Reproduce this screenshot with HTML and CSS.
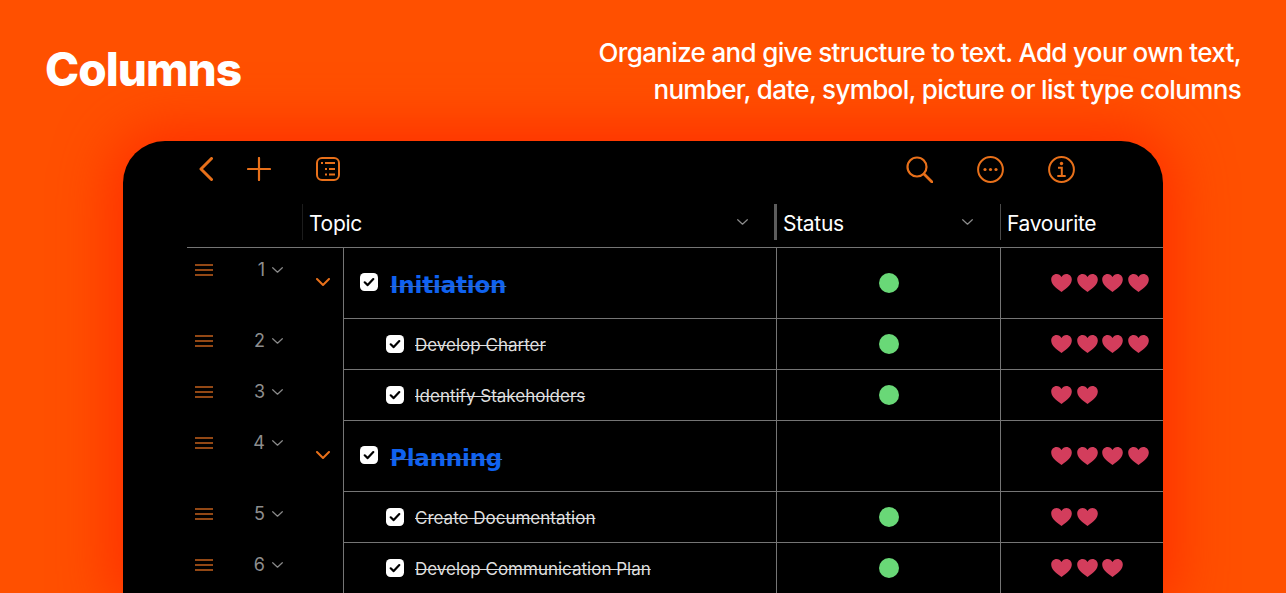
FILE: index.html
```html
<!DOCTYPE html>
<html lang="en">
<head>
    <meta charset="UTF-8">
    <title>Columns</title>
    <link rel="stylesheet" href="styles.css">
</head>
<body>
    <svg class="defs" width="0" height="0">
        <symbol id="heart" viewBox="0 0 21 18"><path d="M10.5 18C4 13.6.2 10 .2 5.6.2 2.4 2.6 0 5.6 0c2.1 0 3.8 1.1 4.9 3C11.6 1.100 13.300 0 15.400 0c3 0 5.400 2.400 5.400 5.600C20.800 10 17 13.600 10.500 18z"/></symbol>
        <symbol id="chev" viewBox="0 0 11 6"><path d="M.7.7l4.800 4.500L10.300.7" fill="none" stroke="currentColor" stroke-width="1.200" stroke-linecap="round" stroke-linejoin="round"/></symbol>
        <symbol id="handle" viewBox="0 0 18 12"><path d="M0 1h18M0 6h18M0 11h18" fill="none" stroke="currentColor" stroke-width="1.500"/></symbol>
        <symbol id="check" viewBox="0 0 18 18"><rect width="18" height="18" rx="4.500" fill="#fff"/><path d="M4.700 9.300l3 2.800 5.600-6" fill="none" stroke="#000" stroke-width="2.200" stroke-linecap="round" stroke-linejoin="round"/></symbol>
    </svg>

    <header class="top">
        <h1>Columns</h1>
        <p>Organize and give structure to text. Add your own text,<br>number, date, symbol, picture or list type columns</p>
    </header>

    <div class="device">
        <div class="toolbar">
            <div class="tools">
                <svg class="back" width="14" height="24" viewBox="0 0 14 24"><path d="M12.500 1.500L2 12l10.500 10.500" fill="none" stroke="currentColor" stroke-width="3" stroke-linecap="round" stroke-linejoin="round"/></svg>
                <svg class="plus" width="24" height="24" viewBox="0 0 24 24"><path d="M12 1v22M1 12h22" fill="none" stroke="currentColor" stroke-width="2.200" stroke-linecap="round"/></svg>
                <svg class="list" width="24" height="24" viewBox="0 0 24 24" fill="none" stroke="currentColor" stroke-width="2"><rect x="1" y="1" width="22" height="22" rx="5"/><path d="M9 6h10M13 12h6M13 17.500h6"/><path d="M5 6h2M9 12h2M9 17.500h2"/></svg>
            </div>
            <div class="tools tools-right">
                <svg width="27" height="27" viewBox="0 0 27 27" fill="none" stroke="currentColor" stroke-width="2.200"><circle cx="11" cy="11" r="9.500"/><path d="M18 18l8 8" stroke-width="2.800" stroke-linecap="round"/></svg>
                <svg width="27" height="27" viewBox="0 0 27 27"><circle cx="13.500" cy="13.500" r="12.400" fill="none" stroke="currentColor" stroke-width="2"/><circle cx="8" cy="13.500" r="1.600" fill="currentColor"/><circle cx="13.500" cy="13.500" r="1.600" fill="currentColor"/><circle cx="19" cy="13.500" r="1.600" fill="currentColor"/></svg>
                <svg width="27" height="27" viewBox="0 0 27 27"><circle cx="13.500" cy="13.500" r="12.400" fill="none" stroke="currentColor" stroke-width="2"/><circle cx="13.500" cy="7.500" r="1.700" fill="currentColor"/><path d="M10 11.800h3.800v8M9.300 20h8.400" fill="none" stroke="currentColor" stroke-width="2"/></svg>
            </div>
        </div>

        <div class="col-head">
            <div class="col-spacer"></div>
            <div class="col col-topic"><span>Topic</span><svg class="chev"><use href="#chev"/></svg></div>
            <div class="col col-status"><span>Status</span><svg class="chev"><use href="#chev"/></svg></div>
            <div class="col col-fav"><span>Favourite</span></div>
        </div>

        <div class="row row-group">
            <div class="gutter">
                <svg class="handle"><use href="#handle"/></svg>
                <span class="num">1</span><svg class="chev"><use href="#chev"/></svg>
                <svg class="expand" width="14" height="9" viewBox="0 0 14 9"><path d="M1 1l6 6 6-6" fill="none" stroke="currentColor" stroke-width="2" stroke-linecap="round" stroke-linejoin="round"/></svg>
            </div>
            <div class="cell topic"><svg class="check"><use href="#check"/></svg><span class="title">Initiation</span></div>
            <div class="cell status"><i class="dot"></i></div>
            <div class="cell fav"><svg class="heart"><use href="#heart"/></svg><svg class="heart"><use href="#heart"/></svg><svg class="heart"><use href="#heart"/></svg><svg class="heart"><use href="#heart"/></svg></div>
        </div>

        <div class="row">
            <div class="gutter">
                <svg class="handle"><use href="#handle"/></svg>
                <span class="num">2</span><svg class="chev"><use href="#chev"/></svg>
            </div>
            <div class="cell topic"><svg class="check"><use href="#check"/></svg><span class="task">Develop Charter</span></div>
            <div class="cell status"><i class="dot"></i></div>
            <div class="cell fav"><svg class="heart"><use href="#heart"/></svg><svg class="heart"><use href="#heart"/></svg><svg class="heart"><use href="#heart"/></svg><svg class="heart"><use href="#heart"/></svg></div>
        </div>

        <div class="row">
            <div class="gutter">
                <svg class="handle"><use href="#handle"/></svg>
                <span class="num">3</span><svg class="chev"><use href="#chev"/></svg>
            </div>
            <div class="cell topic"><svg class="check"><use href="#check"/></svg><span class="task">Identify Stakeholders</span></div>
            <div class="cell status"><i class="dot"></i></div>
            <div class="cell fav"><svg class="heart"><use href="#heart"/></svg><svg class="heart"><use href="#heart"/></svg></div>
        </div>

        <div class="row row-group">
            <div class="gutter">
                <svg class="handle"><use href="#handle"/></svg>
                <span class="num">4</span><svg class="chev"><use href="#chev"/></svg>
                <svg class="expand" width="14" height="9" viewBox="0 0 14 9"><path d="M1 1l6 6 6-6" fill="none" stroke="currentColor" stroke-width="2" stroke-linecap="round" stroke-linejoin="round"/></svg>
            </div>
            <div class="cell topic"><svg class="check"><use href="#check"/></svg><span class="title">Planning</span></div>
            <div class="cell status"></div>
            <div class="cell fav"><svg class="heart"><use href="#heart"/></svg><svg class="heart"><use href="#heart"/></svg><svg class="heart"><use href="#heart"/></svg><svg class="heart"><use href="#heart"/></svg></div>
        </div>

        <div class="row">
            <div class="gutter">
                <svg class="handle"><use href="#handle"/></svg>
                <span class="num">5</span><svg class="chev"><use href="#chev"/></svg>
            </div>
            <div class="cell topic"><svg class="check"><use href="#check"/></svg><span class="task">Create Documentation</span></div>
            <div class="cell status"><i class="dot"></i></div>
            <div class="cell fav"><svg class="heart"><use href="#heart"/></svg><svg class="heart"><use href="#heart"/></svg></div>
        </div>

        <div class="row">
            <div class="gutter">
                <svg class="handle"><use href="#handle"/></svg>
                <span class="num">6</span><svg class="chev"><use href="#chev"/></svg>
            </div>
            <div class="cell topic"><svg class="check"><use href="#check"/></svg><span class="task">Develop Communication Plan</span></div>
            <div class="cell status"><i class="dot"></i></div>
            <div class="cell fav"><svg class="heart"><use href="#heart"/></svg><svg class="heart"><use href="#heart"/></svg><svg class="heart"><use href="#heart"/></svg></div>
        </div>
    </div>
</body>
</html>
```

FILE: styles.css
```css
html, body {
    margin: 0;
    height: 593px;
    overflow: hidden;
}
body {
    background: #ff5000;
    font-family: Inter, "Liberation Sans", sans-serif;
    color: #fff;
}
.defs {
    display: block;
}
.top {
    display: flex;
    justify-content: space-between;
    align-items: center;
    height: 141px;
    padding: 0 45px;
    box-sizing: border-box;
}
.top h1 {
    margin: 0 0 4px;
    font-size: 46px;
    font-weight: 800;
    letter-spacing: -1px;
}
.top p {
    margin: 0;
    font-size: 26px;
    font-weight: 500;
    line-height: 37px;
    letter-spacing: -0.66px;
    text-align: right;
}
.device {
    margin: 0 123px;
    height: 452px;
    padding-left: 64px;
    background: #000;
    border-radius: 42px 42px 0 0;
    box-shadow: 0 0 55px 12px #ff2f00;
    overflow: hidden;
}
.toolbar {
    display: flex;
    justify-content: space-between;
    align-items: center;
    height: 56px;
    padding: 0 88px 0 12px;
    color: #e8701a;
}
.tools {
    display: flex;
    align-items: center;
}
.plus {
    margin-left: 34px;
}
.list {
    margin-left: 45px;
}
.tools-right {
    gap: 44px;
}
.col-head {
    display: grid;
    grid-template-columns: 115px 472px 226px 163px;
    align-items: center;
    height: 51px;
    border-bottom: 1px solid #757575;
    box-sizing: border-box;
}
.col {
    display: flex;
    justify-content: space-between;
    align-items: center;
    height: 36px;
    margin-top: -1px;
    padding: 0 26px 0 6px;
    border-left: 1px solid #1c1c1c;
    font-size: 21px;
    letter-spacing: -0.3px;
}
.col span {
    padding-top: 3px;
}
.col-status {
    padding: 0 27px 0 6px;
    border-left: 3px solid #5c5c5c;
}
.col-fav {
    border-left-color: #4a4a4a;
}
.chev {
    width: 11px;
    height: 6px;
    color: #8a8a8a;
}
.row {
    display: grid;
    grid-template-columns: 156px 433px 224px 163px;
    height: 51px;
}
.row-group {
    height: 71px;
}
.gutter {
    position: relative;
    display: flex;
    align-items: flex-start;
    padding: 14px 0 0 8px;
    box-sizing: border-box;
    color: #8e8e8e;
}
.handle {
    width: 18px;
    height: 12px;
    margin-top: 2px;
    color: #c4601d;
}
.num {
    width: 52px;
    text-align: right;
    font-size: 18px;
    line-height: 16px;
}
.gutter .chev {
    margin: 5px 0 0 7px;
}
.expand {
    position: absolute;
    left: 129px;
    top: 30px;
    color: #e8701a;
}
.cell {
    display: flex;
    align-items: center;
    border-left: 1px solid #757575;
    border-bottom: 1px solid #757575;
    box-sizing: border-box;
}
.topic {
    padding-left: 42px;
}
.row-group .topic {
    padding: 0 0 3px 16px;
}
.check {
    width: 18px;
    height: 18px;
    flex: none;
}
.task {
    margin: 2px 0 0 11px;
    font-size: 17px;
    color: #dedede;
    text-decoration: line-through;
}
.title {
    margin: 6px 0 0 12px;
    font-family: "DejaVu Sans", sans-serif;
    font-size: 23px;
    font-weight: 700;
    letter-spacing: -0.2px;
    color: #0f62f0;
    text-decoration: line-through;
    text-decoration-thickness: 1px;
    text-decoration-color: #3f6cbc;
}
.status {
    justify-content: center;
}
.dot {
    width: 20px;
    height: 20px;
    border-radius: 50%;
    background: #69d877;
}
.fav {
    gap: 4.600px;
    padding-left: 50px;
}
.heart {
    width: 21px;
    height: 18px;
    flex: none;
    fill: #d33d5c;
}
```
